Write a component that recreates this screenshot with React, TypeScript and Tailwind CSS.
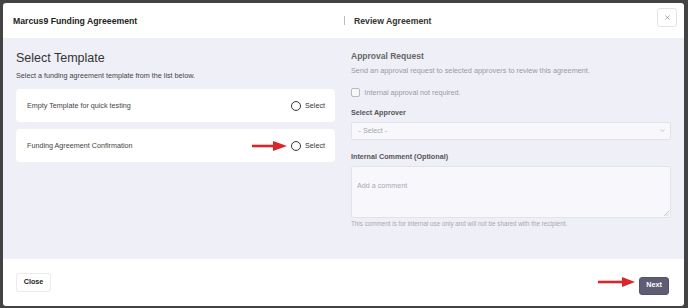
import React from 'react';
import { ChevronDown, X } from 'lucide-react';

// red annotation arrow pointing right
const RedArrow: React.FC<{ className?: string; width: number; shaft: number }> = ({
  className,
  width,
  shaft,
}) => (
  <svg className={className} width={width} height={10} viewBox={`0 0 ${width} 10`}>
    <rect x={0} y={3.7} width={shaft + 1} height={2.6} fill="#d9262b" />
    <polygon points={`${shaft},0 ${width},5 ${shaft},10`} fill="#d9262b" />
  </svg>
);

interface Template {
  name: string;
  marked?: boolean;
}

const templates: Template[] = [
  { name: 'Empty Template for quick testing' },
  { name: 'Funding Agreement Confirmation', marked: true },
];

const TemplateCard: React.FC<{ template: Template }> = ({ template }) => (
  <div className="h-[33px] bg-white rounded-[4px] flex items-center justify-between pl-[11px] pr-[10px]">
    <span className="text-[7.2px] leading-[9px] text-[#444]">{template.name}</span>
    <label className="relative flex items-center gap-[4px] cursor-pointer">
      {template.marked && (
        <RedArrow
          className="absolute right-full mr-[4.5px] top-1/2 -translate-y-1/2"
          width={35}
          shaft={21}
        />
      )}
      <span className="w-[10px] h-[10px] rounded-full border-[1.2px] border-[#333] bg-white" />
      <span className="text-[7.2px] leading-[9px] text-[#333]">Select</span>
    </label>
  </div>
);

export default function App() {
  return (
    <div
      className="w-[688px] h-[308px] bg-[#434343] pt-[3px] pl-[3px] pr-[4px] pb-[2px]"
      style={{ fontFamily: '"Liberation Sans", Arial, sans-serif' }}
    >
      <div className="w-[681px] h-[303px] bg-white rounded-[3px] overflow-hidden flex flex-col">
        {/* Header */}
        <div className="h-[35px] flex items-center shrink-0">
          <div className="w-[341px] pl-[10px]">
            <h2 className="text-[8.7px] leading-[10px] font-bold text-[#222]">
              Marcus9 Funding Agreeement
            </h2>
          </div>
          <div className="flex-1 flex items-center">
            <span className="w-px h-[9px] bg-[#bbb]" />
            <h2 className="ml-[9px] text-[8.7px] leading-[10px] font-bold text-[#333]">
              Review Agreement
            </h2>
          </div>
          <button className="self-start mt-[5px] mr-[7px] w-[20px] h-[19px] flex items-center justify-center rounded-[3px] border border-[#e4e4e8] bg-white">
            <X size={7} strokeWidth={2} className="text-[#777]" />
          </button>
        </div>

        {/* Body */}
        <div className="flex-1 bg-[#efeff8] px-[13px] pt-[13px] grid grid-cols-[319px_320px] gap-x-[16px]">
          {/* Left column */}
          <div className="flex flex-col">
            <h1 className="text-[12.5px] leading-[15px] text-[#333] -mt-[0.5px]">Select Template</h1>
            <p className="mt-[5.5px] text-[7.2px] leading-[9px] text-[#444]">
              Select a funding agreement template from the list below.
            </p>
            <div className="mt-[9px] flex flex-col gap-[7px]">
              {templates.map((t) => (
                <TemplateCard key={t.name} template={t} />
              ))}
            </div>
          </div>

          {/* Right column */}
          <div className="flex flex-col">
            <h3 className="text-[8.5px] leading-[10px] font-bold text-[#666]">Approval Request</h3>
            <p className="mt-[5px] text-[7.3px] leading-[9px] text-[#9a9aa2]">
              Send an approval request to selected approvers to review this agreement.
            </p>
            <label className="mt-[13px] flex items-center gap-[4.5px] h-[9px]">
              <span className="w-[9px] h-[9px] rounded-[2px] border border-[#b8b8c0] bg-[#f8f8fb]" />
              <span className="text-[7.2px] leading-[9px] text-[#9a9aa2]">
                Internal approval not required.
              </span>
            </label>
            <div className="mt-[11px] text-[7.2px] leading-[9px] font-bold text-[#555]">
              Select Approver
            </div>
            <div className="mt-[4.5px] h-[18.5px] flex items-center justify-between rounded-[2px] border border-[#e2e2ea] bg-[#f8f8fc] pl-[6.5px] pr-[4px]">
              <span className="text-[7.2px] leading-[9px] text-[#a5a5ad]">- Select -</span>
              <ChevronDown size={7} strokeWidth={1.5} className="text-[#888]" />
            </div>
            <div className="mt-[12px] text-[7.2px] leading-[9px] font-bold text-[#555]">
              Internal Comment (Optional)
            </div>
            <div className="mt-[5px] h-[51.5px] rounded-[2px] border border-[#e2e2ea] bg-[#f8f8fc] pl-[5px] pt-[3.5px] relative">
              <span className="text-[7.2px] leading-[9px] text-[#a8a8b0]">Add a comment</span>
              <svg
                className="absolute right-[1px] bottom-[1px]"
                width={5}
                height={5}
                viewBox="0 0 5 5"
              >
                <path d="M5 0 L0 5 M5 2.5 L2.5 5" stroke="#aaa" strokeWidth={0.6} />
              </svg>
            </div>
            <p className="mt-[2px] text-[6.3px] leading-[8px] text-[#a8a8b0]">
              This comment is for internal use only and will not be shared with the recipient.
            </p>
          </div>
        </div>

        {/* Footer */}
        <div className="h-[47px] shrink-0 flex items-center justify-between pl-[13px] pr-[15px]">
          <button className="h-[19.5px] w-[35px] rounded-[3px] border border-[#ececf0] bg-white text-[7.2px] font-bold text-[#222] shadow-[0_0_1px_rgba(0,0,0,0.05)]">
            Close
          </button>
          <div className="relative">
            <RedArrow
              className="absolute right-full mr-[4px] top-1/2 -translate-y-[60%]"
              width={37}
              shaft={24}
            />
            <button className="h-[18px] w-[30px] rounded-[3px] border border-[#54526a] bg-[#5f5d73] text-[7.2px] font-bold text-white">
              Next
            </button>
          </div>
        </div>
      </div>
    </div>
  );
}
